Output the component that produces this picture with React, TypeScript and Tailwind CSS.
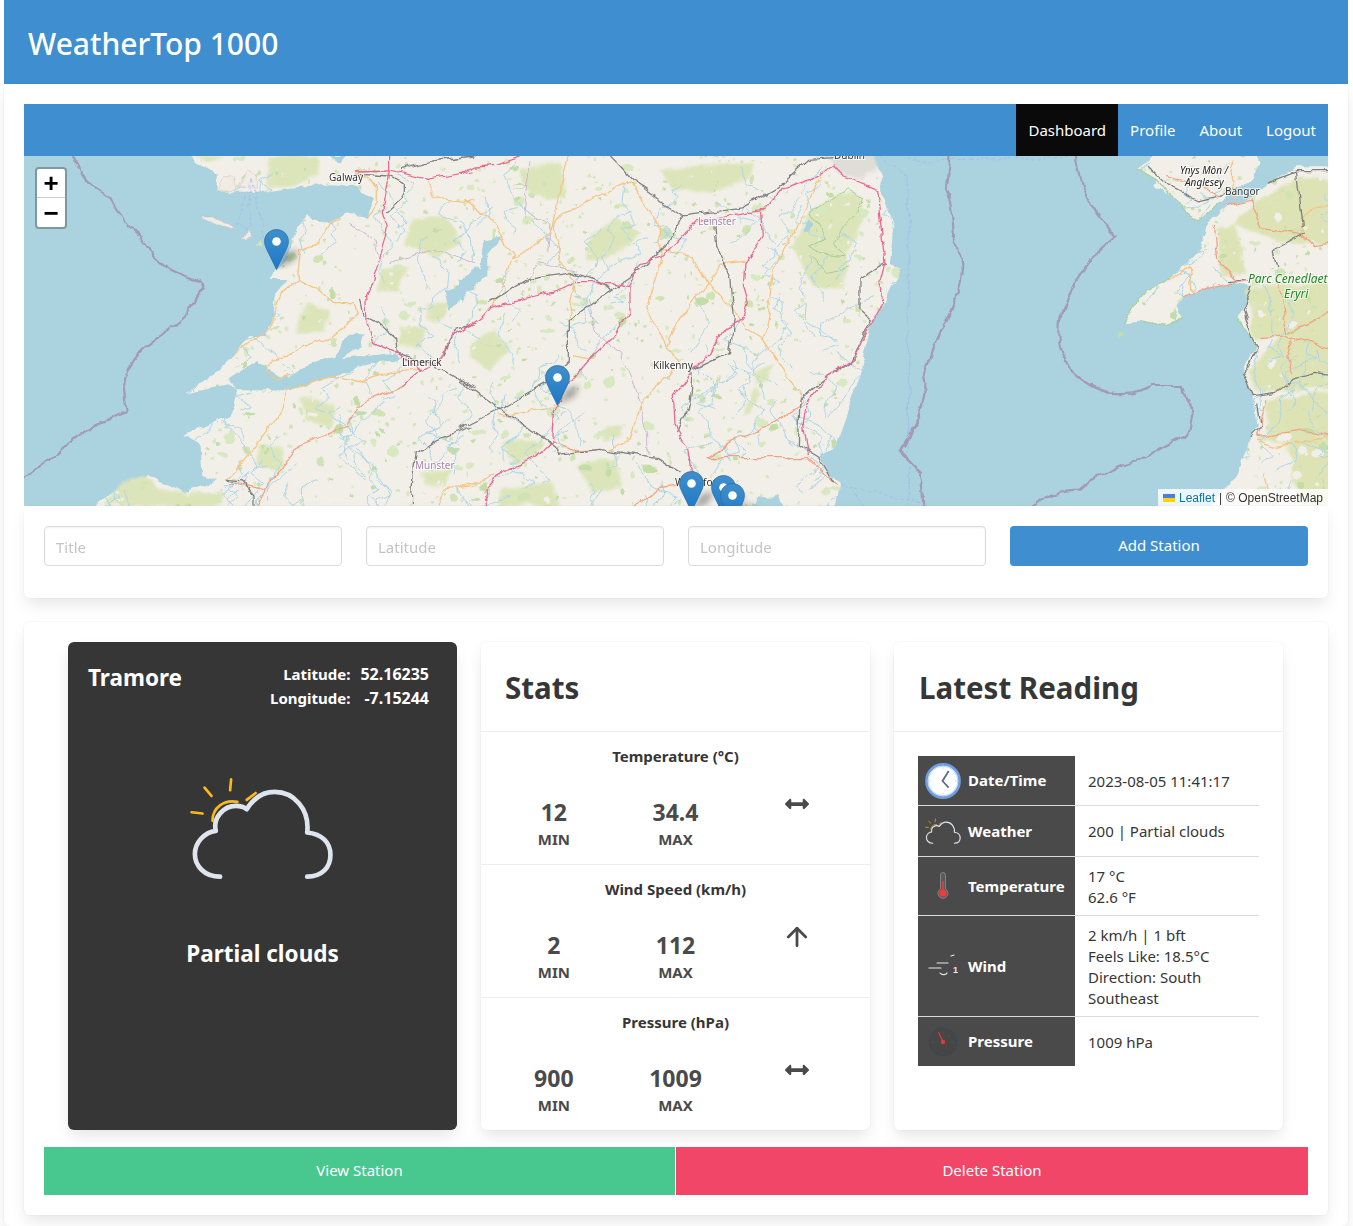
import React from "react";
import { FaArrowsAltH } from "react-icons/fa";
import { ArrowUp } from "lucide-react";

const boxShadow = "shadow-[0_8px_16px_-2px_rgba(10,10,10,0.1),0_0_0_1px_rgba(10,10,10,0.02)]";

// seeded random so the map texture stays the same between runs
const makeRandom = (seed: number) => () => {
  seed = (seed * 16807) % 2147483647;
  return seed / 2147483647;
};

const rnd = makeRandom(4242);
const speckFills = ["#f2efe9", "#d8e8c0", "#d8e8c0", "#cfe3b4", "#c4dda6"];
const specks = Array.from({ length: 2600 }, () => {
  const big = rnd() > 0.85;
  return {
    x: rnd() * 1304,
    y: rnd() * 350,
    rx: big ? 2 + rnd() * 4.5 : 0.7 + rnd() * 1.6,
    ry: big ? 1.5 + rnd() * 3.5 : 0.7 + rnd() * 1.6,
    fill: speckFills[Math.floor(rnd() * speckFills.length)],
  };
});
const rivers = Array.from({ length: 260 }, () => {
  let x = rnd() * 1304;
  let y = rnd() * 350;
  let d = `M${x.toFixed(1)} ${y.toFixed(1)}`;
  const steps = 3 + Math.floor(rnd() * 5);
  for (let i = 0; i < steps; i++) {
    x += (rnd() - 0.5) * 34;
    y += 3 + rnd() * 13;
    d += `L${x.toFixed(1)} ${y.toFixed(1)}`;
  }
  return d;
});

const irelandWest =
  "M490 -40L520 30L575 50L575 100L620 110L700 110L800 95L920 85L990 90L1010 110L1050 125L1035 150L1030 185L960 175L915 200L850 175L815 230L790 310L735 372L790 372L755 420L745 490L725 540L680 540L640 590L590 640L485 710L610 685L640 700L620 780L530 820L478 840L530 870L535 960L580 975L480 1010L370 960L240 1030L170 1100L1350 1100L1350 -40Z";
const irelandEast =
  "M0 -40L1120 -40L1250 35L1270 60L1260 100L1300 220L1290 320L1320 345L1270 450L1235 500L1210 600L1195 680L1130 860L1080 900L1110 960L1140 985L1120 1100L1000 1100L960 1020L880 1025L910 980L850 1100L0 1100Z";
const walesMain =
  "M1330 205L1190 205L1100 250L1040 300L980 320L920 380L900 445L810 540L740 570L700 620L675 670L720 665L800 680L845 655L830 620L850 590L920 565L1000 550L1060 562L1015 650L1070 740L1030 800L1030 830L1060 890L1070 980L1050 1010L1020 1100L970 1170L900 1270L1330 1270Z";
const anglesey = "M712 205L750 190L790 130L1030 130L1085 190L1050 240L960 310L900 360L860 340L810 290L760 255L770 240Z";

const Road = ({ d, color, w = 3.8 }: { d: string; color: string; w?: number }) => (
  <path d={d} fill="none" stroke={color} strokeWidth={w} strokeLinejoin="round" strokeLinecap="round" />
);

const PINK = "#e9678f";
const SALMON = "#f3a182";
const ORANGE = "#f5c583";
const RAIL = "#7f7f7f";
const BORDER = "#c3aecb";
const MARITIME = "#a39ab5";

const MapLabel = ({ x, y, children, className, size = 10 }: { x: number; y: number; children: React.ReactNode; className?: string; size?: number }) => (
  <text
    x={x}
    y={y}
    className={className}
    fontFamily="'Noto Sans', sans-serif"
    fontSize={size}
    stroke="#ffffff"
    strokeOpacity="0.75"
    strokeWidth="2"
    paintOrder="stroke"
  >
    {children}
  </text>
);

const MapTiles = () => (
  <svg viewBox="0 0 1304 350" className="block h-[350px] w-[1304px]">
    <defs>
      <clipPath id="land">
        <path d={irelandWest} transform="scale(0.3333)" />
        <path d={irelandEast} transform="translate(436 0) scale(0.3333)" />
        <path d={walesMain} transform="translate(876 -56) scale(0.3333)" />
        <path d={anglesey} transform="translate(876 -56) scale(0.3333)" />
      </clipPath>
      {/* wobbles the straight segments so coast and roads read as organic */}
      <filter id="rough" filterUnits="userSpaceOnUse" x="-20" y="-20" width="1344" height="390">
        <feTurbulence type="fractalNoise" baseFrequency="0.05" numOctaves="4" seed="7" />
        <feDisplacementMap in="SourceGraphic" scale="9" xChannelSelector="R" yChannelSelector="G" />
        <feGaussianBlur stdDeviation="0.25" />
      </filter>
      <filter id="soft">
        <feGaussianBlur stdDeviation="4" />
      </filter>
    </defs>
    <rect width="1304" height="350" fill="#aad3df" />

    <g filter="url(#rough)">
      {/* land */}
      <g fill="#f2efe9">
        <path d={irelandWest} transform="scale(0.3333)" />
        <path d={irelandEast} transform="translate(436 0) scale(0.3333)" />
        <path d={walesMain} transform="translate(876 -56) scale(0.3333)" />
        <path d={anglesey} transform="translate(876 -56) scale(0.3333)" />
      </g>

      {/* west of Ireland */}
      <g transform="scale(0.3333)">
        <g fill="#dce5ba" filter="url(#soft)">
          <path d="M730 0L880 0L890 60L800 90L730 90Z" />
          <path d="M510 0L600 0L560 20Z" />
          <path d="M1160 190L1260 180L1310 260L1240 300L1140 270Z" />
          <path d="M1070 340L1150 330L1120 410L1060 400Z" />
          <path d="M850 440L920 470L900 530L810 530Z" />
          <path d="M830 720L930 740L920 820L850 790Z" />
          <path d="M700 870L780 880L770 950L690 920Z" />
          <path d="M1190 950L1280 940L1270 990L1210 980Z" />
          <path d="M1200 440L1280 440L1260 490L1210 490Z" />
          <path d="M240 1050L300 970L360 960L400 1000L480 1012L600 1010L590 1050Z" />
          <path d="M1130 510L1210 510L1190 580L1120 570Z" />
        </g>
      </g>

      {/* east of Ireland hills */}
      <g transform="translate(436 0) scale(0.3333)">
        <g fill="#dce5ba" filter="url(#soft)">
          <path d="M1050 170L1130 110L1200 120L1210 190L1160 300L1150 400L1060 390L1000 270Z" />
          <path d="M390 230L470 190L540 230L470 300L380 320Z" />
          <path d="M30 560L100 520L150 580L90 640L30 600Z" />
          <path d="M130 860L250 850L230 900L150 920Z" />
          <path d="M350 930L470 900L490 990L400 1010Z" />
          <path d="M430 820L490 810L480 850L430 850Z" />
          <path d="M880 650L940 620L920 680L880 690Z" />
          <path d="M850 780L880 700L900 710L870 780Z" />
          <path d="M120 1000L280 980L300 1050L120 1050Z" />
          <path d="M600 40L880 20L870 60L760 110L640 100Z" />
          <path d="M170 40L300 20L320 130L210 120Z" />
        </g>
        <path d="M1100 0L1240 0L1250 40L1200 70L1130 50Z" fill="#e0ddd8" filter="url(#soft)" />
      </g>

      {/* Wales hills */}
      <g transform="translate(876 -56) scale(0.3333)">
        <g fill="#dde3b4" filter="url(#soft)">
          <path d="M1060 310L1200 230L1320 240L1320 440L1130 420L1000 370Z" />
          <path d="M1040 570L1320 540L1320 780L1160 710L1060 720Z" />
          <path d="M1045 810L1140 710L1320 740L1320 860L1070 880Z" />
          <path d="M1100 900L1320 870L1320 1100L1100 1010Z" />
          <path d="M950 390L1000 370L1040 520L960 530Z" />
          <path d="M1160 1040L1320 1060L1320 1218L1200 1218Z" />
        </g>
      </g>

      <g clipPath="url(#land)">
        {specks.map((s, i) => (
          <ellipse key={i} cx={s.x} cy={s.y} rx={s.rx} ry={s.ry} fill={s.fill} />
        ))}
        {rivers.map((d, i) => (
          <path key={i} d={d} fill="none" stroke="#add6e6" strokeWidth="1" />
        ))}
      </g>

      <g transform="scale(0.3333)">
        <g fill="#aad3df">
          <path d="M610 670L700 615L735 640L790 665L830 640L930 600L975 540L1020 535L1010 570L950 610L1110 590L1130 605L1000 640L930 660L800 700L640 700Z" />
          <path d="M1262 400L1350 375L1350 400L1310 420L1280 470L1270 440Z" />
          <path d="M920 0L970 0L950 25Z" />
        </g>
        <g fill="#f0ece2" stroke="#c8bcc9" strokeWidth="1.5">
          <path d="M525 180L570 180L640 225L600 215Z" />
          <path d="M655 250L670 222L685 230L665 250Z" />
          <path d="M580 100L600 60L640 70L640 105Z" />
          <path d="M650 95L670 40L700 60L700 100Z" />
        </g>
        <path d="M690 265L710 252L715 265Z" fill="#dbe3b5" />
        <g fill="none" stroke="#9fb7ee" strokeWidth="2" strokeDasharray="10 7">
          <path d="M682 70L640 205" />
          <path d="M682 70L675 212" />
          <path d="M685 70L720 250" />
          <path d="M630 200L720 250" />
        </g>
        <Road color={MARITIME} w={6.5} d="M140 -20C165 60 210 105 262 125C280 170 310 210 350 240C380 300 420 340 470 355C500 365 530 375 542 395C520 430 495 450 485 480C450 515 400 540 350 585C315 620 300 660 300 700L308 768C260 790 200 810 150 850L60 925L-20 980" />
        <Road color={ORANGE} d="M820 370L880 400L930 440L990 440L1000 470L920 540L820 580L730 630" />
        <Road color={ORANGE} d="M640 590L680 560L740 520L750 470L780 400L820 370L830 280L880 260L920 200L950 185" />
        <Road color={ORANGE} d="M725 640L760 665L790 660" />
        <Road color={ORANGE} d="M795 690L770 770L700 860L630 950L610 970" />
        <Road color={ORANGE} d="M800 700L930 660L1000 680L1100 650L1190 640" />
        <Road color={ORANGE} d="M1210 75L1230 125L1350 140" />
        <Road color={ORANGE} d="M1000 45L1060 100L1060 135L1030 180" />
        <Road color={ORANGE} d="M1350 985L1260 1000L1240 1050" />
        <Road color={SALMON} d="M1140 685L1030 735L1000 750L970 810L900 840L820 870L790 910L730 990L700 1050" />
        <Road color={SALMON} d="M620 980L720 1000" />
        <Road color={BORDER} d="M980 205L1050 250L1060 300" w={2.5} />
        <Road color={BORDER} d="M1100 320L1230 275L1350 320" w={2.5} />
        <Road color={RAIL} d="M1135 40L1220 15L1350 0" />
        <Road color={RAIL} d="M1000 55L1100 60L1135 80L1135 130L1090 170" />
        <Road color={RAIL} d="M1010 430L1020 480L1060 500L1115 550L1120 590L1200 620L1260 640L1350 695" />
        <Road color={RAIL} d="M1350 810L1240 850L1180 890L1170 960L1165 1040" />
        <Road color={RAIL} d="M1350 505L1300 520L1260 600" />
        <Road color={RAIL} d="M610 970L650 975L690 1020L690 1050" />
        <Road color={PINK} d="M1100 -20L1100 40L1075 170L1090 220L1060 320L1025 420L1030 510L1050 560L1120 590L1190 645L1140 685" />
        <Road color={PINK} d="M1000 45L1100 42L1210 70L1350 45" />
        <Road color={PINK} d="M1190 645L1250 610L1290 540L1350 505" />
      </g>

      <g transform="translate(436 0) scale(0.3333)">
        <path d="M1050 170L1110 130L1160 100L1205 130L1190 170L1120 260L1160 300L1080 290L1040 270L1100 250Z" fill="none" stroke="#a3cd94" strokeWidth="3" />
        <path d="M1060 300L1100 350L1160 330" fill="none" stroke="#a3cd94" strokeWidth="3" />
        <g fill="#aad3df">
          <path d="M0 380L40 330L60 340L70 250L130 240L85 295L85 360L30 400L0 440Z" />
          <path d="M1030 220L1050 190L1060 205L1040 225Z" />
        </g>
        <g fill="none" stroke="#9fb7ee" strokeWidth="2" strokeDasharray="10 7">
          <path d="M1255 0L1345 60L1345 830" />
          <path d="M1345 940L1345 1050" />
          <path d="M1140 985L1380 1040" />
          <path d="M1180 1000L1210 1050" />
        </g>
        <Road color={MARITIME} w={6.5} d="M1380 780L1318 885L1380 950" />
        <Road color={BORDER} w={2.5} d="M200 370L240 320L350 345" />
        <Road color={BORDER} w={2.5} d="M385 430L410 530L480 590L520 680L560 830L560 890" />
        <Road color={BORDER} w={2.5} d="M210 20L190 160L270 210L260 280" />
        <Road color={ORANGE} d="M15 130L100 200L160 300L130 380L100 450" />
        <Road color={ORANGE} d="M160 310L260 240L290 200L310 170L420 120L510 80L590 200L610 280L700 300L740 380L810 450L860 520L910 550L1030 730" />
        <Road color={ORANGE} d="M330 -20L295 120L280 220L300 310L350 370L325 490" />
        <Road color={ORANGE} d="M610 280L560 450L620 570L660 620" />
        <Road color={ORANGE} d="M860 315L780 325L730 400L660 490L620 570" />
        <Road color={ORANGE} d="M1080 60L1000 240L940 340L930 450L910 550" />
        <Road color={ORANGE} d="M120 780L285 755" />
        <Road color={ORANGE} d="M340 600L400 610" />
        <Road color={ORANGE} d="M640 640L600 680L540 750L510 850L450 880" />
        <Road color={ORANGE} d="M0 990L100 960" />
        <Road color={SALMON} d="M745 905L850 840L960 790L1030 735" />
        <Road color={SALMON} d="M745 905L1045 905L1130 990" />
        <Road color={SALMON} d="M505 1070L600 1000L690 990" />
        <Road color={SALMON} d="M280 860L350 885L420 880" />
        <Road color={RAIL} d="M0 820L120 760L260 680L325 615L325 495L440 410L530 350L620 270L670 180L850 155L960 90L1050 10L1120 5" />
        <Road color={RAIL} d="M0 675L120 760L190 800L260 850L290 895L420 880L590 905L660 950" />
        <Road color={RAIL} d="M430 -20L520 75L670 180" />
        <Road color={RAIL} d="M765 210L770 270L810 370L820 490L805 590L700 640L690 740L650 830" />
        <Road color={RAIL} d="M1200 370L1280 320" />
        <Road color={RAIL} d="M1200 370L1200 460L1235 490L1170 620L1100 660L1020 730L1015 870L1080 910L1120 980" />
        <Road color={RAIL} d="M90 440L200 370L340 350L430 380L450 400" />
        <Road color={PINK} d="M0 55L50 30L110 25L200 -10" />
        <Road color={PINK} d="M0 530L60 490L90 455L280 405L350 380L450 380L505 392L545 320L610 300L650 260L710 195L840 175L905 165L960 100L1050 70L1120 30L1150 60L1250 100L1260 180L1275 320L1260 380L1265 450L1225 520L1180 610L1100 660L1040 740L1030 800L1045 900" />
        <Road color={PINK} d="M510 392L510 470L465 540L380 620L320 690L280 770L275 855L230 900L130 940L75 1000L85 1070" />
        <Road color={PINK} d="M905 170L910 240L855 320L850 390L865 440L850 490L790 520L755 590L700 640L640 720L645 810L680 870L695 950" />
      </g>

      <g transform="translate(876 -56) scale(0.3333)">
        <path d="M655 700L668 690L668 705L655 712Z" fill="#c5dca8" />
        <path d="M712 205L770 240L810 290L860 340L900 360L960 310M675 670L700 620L740 570L810 540M720 665L800 680L845 655M1015 650L1070 740" fill="none" stroke="#a9d0a0" strokeWidth="4" />
        <Road color={MARITIME} w={6.5} d="M155 140L140 270C160 320 165 380 165 430C190 490 190 530 175 570L105 730L70 830C85 900 50 990 0 1050C50 1090 75 1140 68 1240" />
        <Road color={MARITIME} w={6.5} d="M530 140C525 260 600 360 650 405L570 480C530 530 510 590 490 620C470 690 470 760 530 830C600 900 700 890 760 858L845 858C855 900 870 920 877 938L860 1010C800 1030 770 1050 740 1075C670 1080 600 1120 545 1172C480 1172 430 1180 385 1240" />
        <g fill="none" stroke="#9fb7ee" strokeWidth="2" strokeDasharray="10 7">
          <path d="M0 215L28 230L25 1190L80 1218" />
          <path d="M20 175L75 180L530 172" />
        </g>
        <Road color={ORANGE} d="M1000 180L1000 240L1010 300" />
        <Road color={ORANGE} d="M810 540L870 500L880 580" />
        <Road color={ORANGE} d="M1070 1020L1130 1040L1320 1000" />
        <Road color={ORANGE} d="M1090 1120L1120 1240" />
        <Road color={ORANGE} d="M1320 290L1210 350L1210 400" />
        <Road color={SALMON} d="M800 230L880 250L960 285" />
        <Road color={SALMON} d="M940 380L950 480L1010 540" />
        <Road color={SALMON} d="M850 590L920 565L1000 550L1060 540" />
        <Road color={SALMON} d="M980 320L1050 300L1090 380L1200 400L1240 440L1320 430" />
        <Road color={SALMON} d="M1140 560L1160 700L1320 620" />
        <Road color={SALMON} d="M1080 715L1180 710L1320 750" />
        <Road color={SALMON} d="M1180 720L1160 770L1180 820" />
        <Road color={SALMON} d="M1100 900L1070 1010L1210 990L1320 1010" />
        <Road color={RAIL} d="M750 205L810 260L890 300L960 285L1020 270" />
        <Road color={RAIL} d="M1320 215L1190 215L1100 250" />
        <Road color={RAIL} d="M1060 560L1030 630L1060 720L1075 740" />
        <Road color={RAIL} d="M1075 740L1030 820L1060 890L1130 880L1180 840L1240 820L1320 830" />
        <Road color={RAIL} d="M1070 910L1080 980L1050 1010" />
        <Road color={RAIL} d="M1210 400L1120 450L1130 500M1190 220L1210 380" />
        <Road color={RAIL} d="M990 545L1040 540" />
      </g>
    </g>

    <MapLabel x={305} y={25} className="fill-[#333333]">Galway</MapLabel>
    <MapLabel x={378} y={210} className="fill-[#333333]">Limerick</MapLabel>
    <MapLabel x={391} y={313} className="fill-[#a583ab]">Munster</MapLabel>
    <MapLabel x={674} y={69} className="fill-[#a583ab]">Leinster</MapLabel>
    <MapLabel x={629} y={213} className="fill-[#333333]">Kilkenny</MapLabel>
    <MapLabel x={810} y={3} className="fill-[#333333]">Dublin</MapLabel>
    <MapLabel x={651} y={330} className="fill-[#333333]">Waterford</MapLabel>
    <MapLabel x={1156} y={18} className="fill-[#222222] italic">Ynys Môn /</MapLabel>
    <MapLabel x={1161} y={30} className="fill-[#222222] italic">Anglesey</MapLabel>
    <MapLabel x={1201} y={39} className="fill-[#333333]">Bangor</MapLabel>
    <MapLabel x={1224} y={127} size={12} className="fill-[#1c861c] italic">Parc Cenedlaethol</MapLabel>
    <MapLabel x={1260} y={142} size={12} className="fill-[#1c861c] italic">Eryri</MapLabel>
  </svg>
);

const Pin = ({ className }: { className: string }) => (
  <svg viewBox="0 0 50 41" className={`absolute h-[41px] w-[50px] ${className}`}>
    <defs>
      <linearGradient id="pinFill" x1="0" y1="0" x2="0" y2="1">
        <stop offset="0" stopColor="#3f8fcb" />
        <stop offset="1" stopColor="#1f78c6" />
      </linearGradient>
      <filter id="pinShadow" x="-50%" y="-50%" width="200%" height="200%">
        <feGaussianBlur stdDeviation="3.2" />
      </filter>
    </defs>
    <path d="M13 40L22 24L34 20L30 31Z" fill="#000000" opacity="0.32" filter="url(#pinShadow)" />
    <path
      d="M12.5 0.6C5.9 0.6 0.6 5.7 0.6 12.4c0 3 1 5.3 2.3 8.3L12.5 40.4l9.6-19.7c1.3-3 2.3-5.3 2.3-8.3C24.4 5.7 19.1 0.6 12.5 0.6z"
      fill="url(#pinFill)"
      stroke="#2a6fa8"
      strokeWidth="0.8"
    />
    <circle cx="12.5" cy="12.5" r="4.3" fill="#ffffff" />
  </svg>
);

const MapPanel = () => (
  <div className="relative h-[350px] overflow-hidden">
    <MapTiles />
    <Pin className="left-[240px] top-[73px]" />
    <Pin className="left-[521px] top-[209px]" />
    <Pin className="left-[655px] top-[315px]" />
    <Pin className="left-[687px] top-[319px]" />
    <Pin className="left-[696px] top-[327px]" />

    <div className="absolute left-[11px] top-[11px] w-[32px] rounded-[4px] border-2 border-[#7f979f] bg-white font-['Liberation_Sans',sans-serif] text-black">
      <div className="flex h-[29px] items-center justify-center border-b border-[#cccccc] text-[26px] leading-none font-bold">+</div>
      <div className="flex h-[29px] items-center justify-center text-[26px] leading-none font-bold">−</div>
    </div>

    <div className="absolute right-0 bottom-0 flex h-[17px] items-center bg-white/80 pr-[5px] pl-[5px] font-['Liberation_Sans',sans-serif] text-[12px] leading-none text-[#333333]">
      <svg viewBox="0 0 12 8" className="mr-1 h-2 w-3">
        <rect width="12" height="4" fill="#4C7BE1" />
        <rect y="4" width="12" height="4" fill="#FFD500" />
      </svg>
      <span className="text-[#0078a8]">Leaflet</span>
      <span className="mx-1">|</span>
      <span>© OpenStreetMap</span>
    </div>
  </div>
);

const inputClass =
  "h-10 w-full min-w-0 rounded-[4px] border border-[#dbdbdb] bg-white pt-[2px] px-[11px] text-[15px] text-[#363636] shadow-[inset_0_1px_2px_rgba(10,10,10,0.05)] placeholder:text-[#c4c4c4]";

const CloudIcon = ({ className }: { className: string }) => (
  <svg viewBox="385 405 435 310" fill="none" strokeLinecap="round" className={className}>
    <g stroke="#fbb81f" strokeWidth="8">
      <path d="M455 540C455 500 490 475 530 483" />
      <path d="M392 514L425 518" />
      <path d="M431 440L452 465" />
      <path d="M511 415L508 448" />
      <path d="M558 477L585 456" />
    </g>
    <path
      d="M478 708C430 708 402 675 402 640C402 605 430 575 465 570C455 530 490 495 525 495C540 495 550 498 558 505C580 470 610 453 642 453C700 453 748 505 740 575C785 580 810 605 810 642C810 680 785 708 740 708"
      stroke="#dfe5ee"
      strokeWidth="14"
      strokeLinejoin="round"
    />
  </svg>
);

const ClockIcon = () => (
  <svg viewBox="0 0 36 36" className="h-9 w-9">
    <circle cx="18" cy="18" r="16.6" fill="#ffffff" stroke="#6f9fe2" strokeWidth="2.6" />
    <circle cx="18" cy="18" r="14.8" fill="none" stroke="#a9c5ee" strokeWidth="0.8" />
    <path d="M23.7 8L17.5 18L23.7 24.7" fill="none" stroke="#5f6d84" strokeWidth="1.8" />
    <g fill="#c8ccd4">
      <circle cx="18" cy="5" r="0.7" />
      <circle cx="18" cy="31" r="0.7" />
      <circle cx="5" cy="18" r="0.7" />
      <circle cx="31" cy="18" r="0.7" />
    </g>
  </svg>
);

const ThermometerIcon = () => (
  <svg viewBox="0 0 12 28" className="h-7 w-3">
    <path d="M3.5 17V3a2.5 2.5 0 0 1 5 0v14a5 5 0 1 1-5 0z" fill="#5a5a5a" stroke="#8f8f8f" strokeWidth="0.8" />
    <rect x="5.2" y="9" width="1.6" height="10" fill="#ef3b3b" />
    <circle cx="6" cy="21.2" r="3.6" fill="#ef3b3b" />
  </svg>
);

const WindIcon = () => (
  <svg viewBox="0 0 30 24" className="h-6 w-[30px]">
    <g fill="none" stroke="#e8e8e8" strokeWidth="1.2" strokeLinecap="round">
      <path d="M23 2L26 1" />
      <path d="M9 9H20" />
      <path d="M1 14H13" />
      <path d="M12 19C14 21.5 18 21 19 19" />
    </g>
    <text x="25" y="19" fill="#e8e8e8" fontSize="9" fontWeight="700" fontFamily="'Liberation Sans', sans-serif">
      1
    </text>
  </svg>
);

const PressureIcon = () => (
  <svg viewBox="0 0 30 30" className="h-[30px] w-[30px]">
    <circle cx="15" cy="15" r="13.8" fill="#464646" stroke="#38465a" strokeWidth="1" />
    <g stroke="#545454" strokeWidth="0.7">
      <path d="M15 4V7" />
      <path d="M26 15H23" />
      <path d="M4 15H7" />
      <path d="M22 8L20 10" />
    </g>
    <path d="M10.5 5L15 15" stroke="#e33838" strokeWidth="1.3" />
    <circle cx="15" cy="15" r="2.2" fill="#e33838" />
  </svg>
);

const StationCard = () => (
  <div className="flex h-[488px] w-[389px] flex-col rounded-md bg-[#363636] p-5 text-white shadow-[0_8px_16px_-2px_rgba(10,10,10,0.1)]">
    <div className="flex justify-between">
      <div className="mt-[1px] text-[22.5px] leading-[30px] font-bold">Tramore</div>
      <div className="grid grid-cols-[auto_auto] justify-end gap-x-[10px] pr-2 text-[15px] leading-6 font-bold">
        <span className="text-right">Latitude:</span>
        <span className="text-right text-base">52.16235</span>
        <span className="text-right">Longitude:</span>
        <span className="text-right text-base">-7.15244</span>
      </div>
    </div>
    <div className="mt-[66px] flex justify-center pr-[3px]">
      <CloudIcon className="h-[103px] w-[145px]" />
    </div>
    <div className="mt-[60px] text-center text-[22.5px] leading-[30px] font-bold">Partial clouds</div>
  </div>
);

type StatRowProps = { title: string; min: string; max: string; icon: React.ReactNode; last?: boolean };

const StatRow = ({ title, min, max, icon, last }: StatRowProps) => (
  <div className={`h-[133px] px-3 pt-[12px] ${last ? "" : "border-b border-[#ededed]"}`}>
    <div className="text-center text-[15px] leading-6 font-bold text-[#363636]">{title}</div>
    <div className="mt-[29px] grid grid-cols-3 text-center text-[#4a4a4a]">
      <div>
        <div className="text-[23px] leading-[30px] font-bold">{min}</div>
        <div className="text-[15px] leading-6 font-bold">MIN</div>
      </div>
      <div>
        <div className="text-[23px] leading-[30px] font-bold">{max}</div>
        <div className="text-[15px] leading-6 font-bold">MAX</div>
      </div>
      <div className="-mt-[5px] flex justify-center text-2xl">{icon}</div>
    </div>
  </div>
);

const StatsCard = () => (
  <div className={`h-[488px] w-[389px] overflow-hidden rounded-md bg-white ${boxShadow}`}>
    <div className="flex h-[90px] items-center border-b border-[#ededed] pt-[3px] pl-6 text-[29.5px] font-bold text-[#363636]">Stats</div>
    <StatRow title="Temperature (°C)" min="12" max="34.4" icon={<FaArrowsAltH />} />
    <StatRow title="Wind Speed (km/h)" min="2" max="112" icon={<ArrowUp size={30} strokeWidth={2.2} className="-mt-[3px]" />} />
    <StatRow title="Pressure (hPa)" min="900" max="1009" icon={<FaArrowsAltH />} last />
  </div>
);

type ReadingRowProps = { icon: React.ReactNode; label: string; heightClass: string; children: React.ReactNode; last?: boolean };

const ReadingRow = ({ icon, label, heightClass, children, last }: ReadingRowProps) => (
  <div className={`flex ${heightClass} ${last ? "" : "border-b border-[#dbdbdb]"}`}>
    <div className="flex w-[157px] shrink-0 items-center bg-[#4a4a4a] pl-[7px] text-[15px] font-bold text-white">
      <div className="flex w-9 shrink-0 justify-center">{icon}</div>
      <span className="ml-[7px]">{label}</span>
    </div>
    <div className="flex flex-col justify-center pt-[1px] pl-[13px] text-[15px] leading-[21px] text-[#363636]">{children}</div>
  </div>
);

const LatestCard = () => (
  <div className={`h-[488px] w-[389px] rounded-md bg-white ${boxShadow}`}>
    <div className="flex h-[90px] items-center border-b border-[#ededed] pt-[3px] pl-[25px] text-[29.5px] font-bold text-[#363636]">Latest Reading</div>
    <div className="mx-6 mt-6">
      <ReadingRow icon={<ClockIcon />} label="Date/Time" heightClass="h-[50px]">
        <span>2023-08-05 11:41:17</span>
      </ReadingRow>
      <ReadingRow icon={<CloudIcon className="h-[26px] w-9" />} label="Weather" heightClass="h-[51px]">
        <span>200 | Partial clouds</span>
      </ReadingRow>
      <ReadingRow icon={<ThermometerIcon />} label="Temperature" heightClass="h-[59px]">
        <span>17 °C</span>
        <span>62.6 °F</span>
      </ReadingRow>
      <ReadingRow icon={<WindIcon />} label="Wind" heightClass="h-[101px]">
        <span>2 km/h | 1 bft</span>
        <span>Feels Like: 18.5°C</span>
        <span>Direction: South</span>
        <span>Southeast</span>
      </ReadingRow>
      <ReadingRow icon={<PressureIcon />} label="Pressure" heightClass="h-[49px]" last>
        <span>1009 hPa</span>
      </ReadingRow>
    </div>
  </div>
);

export default function App() {
  return (
    <div className="bg-white pr-[5px] pl-1 font-['Noto_Sans',sans-serif] text-[15px] text-[#4a4a4a]">
      <header className="flex h-[84px] items-center bg-[#3e8ed0] pt-[2px] pl-6 text-[30px] font-medium text-white">WeatherTop 1000</header>

      <div className={`rounded-md bg-white p-5 pb-[11px] ${boxShadow}`}>
        <nav className="flex h-[52px] justify-end bg-[#3e8ed0] text-white">
          <a className="flex items-center bg-[#0a0a0a] px-3">Dashboard</a>
          <a className="flex items-center px-3">Profile</a>
          <a className="flex items-center px-3">About</a>
          <a className="flex items-center px-3">Logout</a>
        </nav>

        <MapPanel />

        <div className={`relative grid h-[92px] grid-cols-4 gap-6 rounded-md bg-white p-5 ${boxShadow}`}>
          <input className={inputClass} placeholder="Title" />
          <input className={inputClass} placeholder="Latitude" />
          <input className={inputClass} placeholder="Longitude" />
          <button className="h-10 rounded-[4px] bg-[#3e8ed0] pb-px text-[15px] text-white">Add Station</button>
        </div>

        <div className={`mt-6 rounded-md bg-white p-5 ${boxShadow}`}>
          <div className="flex justify-center gap-6 pr-px">
            <StationCard />
            <StatsCard />
            <LatestCard />
          </div>
          <div className="mt-[17px] flex h-12 gap-px">
            <button className="w-[631px] bg-[#48c78e] pb-[2px] text-[15px] text-white">View Station</button>
            <button className="flex-1 bg-[#f14668] pb-[2px] text-[15px] text-white">Delete Station</button>
          </div>
        </div>
      </div>
    </div>
  );
}
